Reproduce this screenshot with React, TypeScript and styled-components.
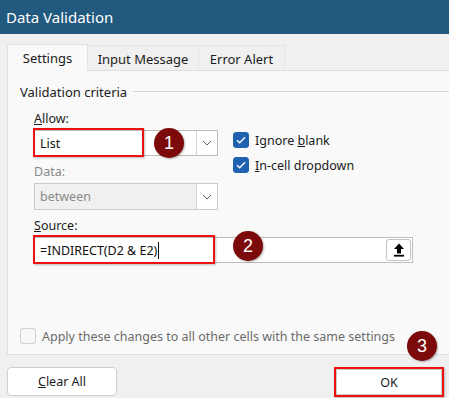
import React from "react";
import styled, { createGlobalStyle } from "styled-components";

const GlobalStyle = createGlobalStyle`
    html, body {
        margin: 0;
        padding: 0;
        background: #f0f0f0;
    }
    body {
        font-family: "Noto Sans", "Open Sans", Arial, sans-serif;
        color: #1b1b1b;
    }
`;

const Window = styled.div`
    position: relative;
    width: 449px;
    height: 398px;
    overflow: hidden;
    background: #f0f0f0;
`;

const TitleBar = styled.div`
    height: 34px;
    background: #22597f;
    color: #ffffff;
    display: flex;
    align-items: center;
    padding-left: 6px;
    font-size: 15px;
`;

const Body = styled.div`
    padding: 9px 0 0 7px;
`;

const TabStrip = styled.div`
    display: flex;
    align-items: flex-end;
    height: 27px;
`;

const Tab = styled.div<{ $active?: boolean; $w: number }>`
    width: ${p => p.$w}px;
    height: ${p => (p.$active ? 27 : 25)}px;
    box-sizing: border-box;
    display: flex;
    align-items: center;
    justify-content: center;
    font-size: 13px;
    background: ${p => (p.$active ? "#f9f9f9" : "#f0f0f0")};
    border: 1px solid ${p => (p.$active ? "#e2e2e2" : "#e4e4e4")};
    border-bottom: none;
    border-left: ${p => (p.$active ? "1px solid #e2e2e2" : "none")};
    position: relative;
    z-index: ${p => (p.$active ? 1 : 0)};
    padding-top: ${p => (p.$active ? 0 : 1)}px;
    margin-bottom: ${p => (p.$active ? -1 : 0)}px;
`;

const Panel = styled.div`
    width: 480px;
    height: 285px;
    box-sizing: border-box;
    background: #f9f9f9;
    border: 1px solid #dedede;
    display: flex;
    flex-direction: column;
    padding: 12px 0 10px 12px;
`;

const GroupHeader = styled.div`
    display: flex;
    align-items: center;
    gap: 6px;
    height: 17px;
    font-size: 13px;
`;

const GroupRule = styled.div`
    flex: 1;
    height: 1px;
    background: #d6d6d6;
`;

const Criteria = styled.div`
    padding-left: 14px;
    padding-top: 10px;
`;

const TopRow = styled.div`
    display: flex;
    gap: 15px;
`;

const FieldColumn = styled.div`
    width: 184px;
    display: flex;
    flex-direction: column;
`;

const Label = styled.div<{ $disabled?: boolean; $gap?: number }>`
    height: 17px;
    font-size: 12.5px;
    line-height: 17px;
    color: ${p => (p.$disabled ? "#8a8a8a" : "#1b1b1b")};
    margin-top: ${p => p.$gap ?? 0}px;
    margin-bottom: 3px;
`;

const Combo = styled.div<{ $disabled?: boolean; $h: number }>`
    position: relative;
    height: ${p => p.$h}px;
    box-sizing: border-box;
    display: flex;
    align-items: stretch;
    border: 1px solid ${p => (p.$disabled ? "#cacaca" : "#bdbdbd")};
    background: ${p => (p.$disabled ? "#f0f0f0" : "#ffffff")};
    color: ${p => (p.$disabled ? "#8a8a8a" : "#111111")};
    font-size: 12.5px;
`;

const ComboText = styled.div`
    flex: 1;
    display: flex;
    align-items: center;
    padding-left: 5px;
`;

const DropButton = styled.div`
    width: 20px;
    background: #ffffff;
    border-left: 1px solid #d2d2d2;
    display: flex;
    align-items: center;
    justify-content: center;
`;

const Highlight = styled.div<{ $w: number }>`
    position: absolute;
    left: -2px;
    top: -3px;
    width: ${p => p.$w}px;
    height: 29px;
    box-sizing: border-box;
    border: 2px solid #ee1111;
    box-shadow: 1px 1px 2px rgba(0, 0, 0, 0.25);
    pointer-events: none;
`;

const CheckColumn = styled.div`
    display: flex;
    flex-direction: column;
    gap: 9px;
    padding-top: 22px;
`;

const CheckRow = styled.label<{ $muted?: boolean }>`
    display: flex;
    align-items: center;
    gap: 6px;
    height: 16px;
    font-size: 12.5px;
    color: ${p => (p.$muted ? "#6b6b6b" : "#1b1b1b")};
`;

const Box = styled.span<{ $checked?: boolean }>`
    width: 16px;
    height: 16px;
    box-sizing: border-box;
    border-radius: 3px;
    display: flex;
    align-items: center;
    justify-content: center;
    background: ${p => (p.$checked ? "#1f62b0" : "#f7f7f7")};
    border: 1px solid ${p => (p.$checked ? "#1f62b0" : "#cfcfcf")};
`;

const SourceInput = styled.div`
    position: relative;
    width: 379px;
    height: 26px;
    box-sizing: border-box;
    border: 1px solid #bdbdbd;
    background: #ffffff;
    display: flex;
    align-items: center;
    padding: 0 1px 0 5px;
    font-size: 12.5px;
    color: #111111;
`;

const Caret = styled.span`
    display: inline-block;
    width: 1px;
    height: 17px;
    background: #111;
    margin-left: 1px;
`;

const RefButton = styled.div`
    margin-left: auto;
    width: 25px;
    height: 22px;
    box-sizing: border-box;
    border: 1px solid #c4c4c4;
    border-radius: 3px;
    background: #ffffff;
    display: flex;
    align-items: center;
    justify-content: center;
`;

const ApplyRow = styled.div`
    margin-top: auto;
`;

const Footer = styled.div`
    display: flex;
    justify-content: space-between;
    align-items: flex-start;
    padding: 12px 5px 0 7px;
`;

const Button = styled.div<{ $marked?: boolean }>`
    width: 110px;
    height: ${p => (p.$marked ? 30 : 29)}px;
    box-sizing: border-box;
    display: flex;
    align-items: center;
    justify-content: center;
    background: #ffffff;
    font-size: 12.5px;
    border-radius: ${p => (p.$marked ? 0 : 4)}px;
    border: ${p => (p.$marked ? "2px solid #ee1111" : "1px solid #cfcfcf")};
    box-shadow: ${p => (p.$marked ? "inset 0 0 0 1px #c9c9c9, 1px 1px 2px rgba(0,0,0,0.25)" : "none")};
`;

const Marker = styled.div<{ $x: number; $y: number }>`
    position: absolute;
    left: ${p => p.$x}px;
    top: ${p => p.$y}px;
    width: 30px;
    height: 30px;
    border-radius: 50%;
    background: #7d0a0a;
    color: #ffffff;
    font-family: "Liberation Sans", Arial, sans-serif;
    font-size: 18px;
    display: flex;
    align-items: center;
    justify-content: center;
    box-shadow: 1px 1px 2px rgba(0, 0, 0, 0.3);
`;

function Chevron() {
    return (
        <svg width="10" height="6" viewBox="0 0 10 6">
            <path d="M1 1l4 4 4-4" fill="none" stroke="#606060" strokeWidth="1" />
        </svg>
    );
}

function Tick() {
    return (
        <svg width="10" height="8" viewBox="0 0 10 8">
            <path d="M1 4.2l2.7 2.6L9 1.3" fill="none" stroke="#fff" strokeWidth="1.4" />
        </svg>
    );
}

function UploadIcon() {
    return (
        <svg width="12" height="14" viewBox="0 0 12 14">
            <path d="M6 0.5L11 6H8v4.5H4V6H1z" fill="#000" />
            <rect x="1" y="11.8" width="10" height="1.8" fill="#000" />
        </svg>
    );
}

function App() {
    return (
        <Window>
            <GlobalStyle />
            <TitleBar>Data Validation</TitleBar>
            <Body>
                <TabStrip>
                    <Tab $active $w={81}>Settings</Tab>
                    <Tab $w={111}>Input Message</Tab>
                    <Tab $w={86}>Error Alert</Tab>
                </TabStrip>
                <Panel>
                    <GroupHeader>
                        <span>Validation criteria</span>
                        <GroupRule />
                    </GroupHeader>
                    <Criteria>
                        <TopRow>
                            <FieldColumn>
                                <Label><u>A</u>llow:</Label>
                                <Combo $h={26}>
                                    <ComboText>List</ComboText>
                                    <DropButton><Chevron /></DropButton>
                                    <Highlight $w={111} />
                                </Combo>
                                <Label $disabled $gap={7}>Data:</Label>
                                <Combo $disabled $h={27}>
                                    <ComboText>between</ComboText>
                                    <DropButton><Chevron /></DropButton>
                                </Combo>
                            </FieldColumn>
                            <CheckColumn>
                                <CheckRow>
                                    <Box $checked><Tick /></Box>
                                    <span>Ignore <u>b</u>lank</span>
                                </CheckRow>
                                <CheckRow>
                                    <Box $checked><Tick /></Box>
                                    <span><u>I</u>n-cell dropdown</span>
                                </CheckRow>
                            </CheckColumn>
                        </TopRow>
                        <Label $gap={7}><u>S</u>ource:</Label>
                        <SourceInput>
                            <span>=INDIRECT(D2 &amp; E2)</span>
                            <Caret />
                            <RefButton><UploadIcon /></RefButton>
                            <Highlight $w={182} />
                        </SourceInput>
                    </Criteria>
                    <ApplyRow>
                        <CheckRow $muted>
                            <Box />
                            <span>Apply these changes to all other cells with the same settings</span>
                        </CheckRow>
                    </ApplyRow>
                </Panel>
            </Body>
            <Footer>
                <Button><u>C</u>lear All</Button>
                <Button $marked>OK</Button>
            </Footer>
            <Marker $x={154} $y={128}>1</Marker>
            <Marker $x={233} $y={231}>2</Marker>
            <Marker $x={407} $y={331}>3</Marker>
        </Window>
    );
}

export default App;
